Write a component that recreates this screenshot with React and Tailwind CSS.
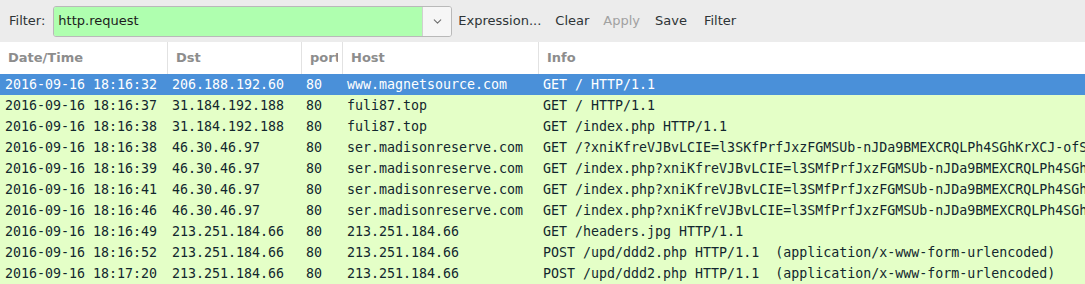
import React from "react";
import { ChevronDown } from "lucide-react";

const rows = [
  ["2016-09-16 18:16:32", "206.188.192.60", "80", "www.magnetsource.com", "GET / HTTP/1.1"],
  ["2016-09-16 18:16:37", "31.184.192.188", "80", "fuli87.top", "GET / HTTP/1.1"],
  ["2016-09-16 18:16:38", "31.184.192.188", "80", "fuli87.top", "GET /index.php HTTP/1.1"],
  ["2016-09-16 18:16:38", "46.30.46.97", "80", "ser.madisonreserve.com", "GET /?xniKfreVJBvLCIE=l3SKfPrfJxzFGMSUb-nJDa9BMEXCRQLPh4SGhKrXCJ-ofSih17OIFxzsmTu2KV_OpqxveN0SZFT_zR3AaQ4ilotXQB5MrPzwnEqWwxWeioXW-pHQaqf-lCh4"],
  ["2016-09-16 18:16:39", "46.30.46.97", "80", "ser.madisonreserve.com", "GET /index.php?xniKfreVJBvLCIE=l3SMfPrfJxzFGMSUb-nJDa9BMEXCRQLPh4SGhKrXCJ-ofSih17OIFxzsmTu2KV_OpqxveN0SZFT"],
  ["2016-09-16 18:16:41", "46.30.46.97", "80", "ser.madisonreserve.com", "GET /index.php?xniKfreVJBvLCIE=l3SMfPrfJxzFGMSUb-nJDa9BMEXCRQLPh4SGhKrXCJ-ofSih17OIFxzsmTu2KV_OpqxveN0SZFT"],
  ["2016-09-16 18:16:46", "46.30.46.97", "80", "ser.madisonreserve.com", "GET /index.php?xniKfreVJBvLCIE=l3SMfPrfJxzFGMSUb-nJDa9BMEXCRQLPh4SGhKrXCJ-ofSih17OIFxzsmTu2KV_OpqxveN0SZFT"],
  ["2016-09-16 18:16:49", "213.251.184.66", "80", "213.251.184.66", "GET /headers.jpg HTTP/1.1"],
  ["2016-09-16 18:16:52", "213.251.184.66", "80", "213.251.184.66", "POST /upd/ddd2.php HTTP/1.1  (application/x-www-form-urlencoded)"],
  ["2016-09-16 18:17:20", "213.251.184.66", "80", "213.251.184.66", "POST /upd/ddd2.php HTTP/1.1  (application/x-www-form-urlencoded)"],
];

const headers = ["Date/Time", "Dst", "port", "Host", "Info"];

function ToolButton({ label, disabled }) {
  return (
    <span className={disabled ? "text-[#a1a1a1]" : "text-[#2e3436]"}>{label}</span>
  );
}

export default function App() {
  return (
    <div className="w-[1085px] h-[284px] overflow-hidden bg-white font-['DejaVu_Sans',sans-serif]">
      {/* filter toolbar */}
      <div className="h-[42px] bg-[#ececec] flex items-center text-[13px]">
        <span className="ml-[9px] text-[#2e3436]">Filter:</span>
        <div className="ml-[8px] w-[399px] h-[31px] flex rounded-[3px] border border-[#b9b9b9] overflow-hidden">
          <div className="flex-1 bg-[#afffaf] flex items-center pl-[4px] text-[#1c1c1c]">http.request</div>
          <div className="w-[29px] bg-[#f6f6f6] border-l border-[#d0d0d0] flex items-center justify-center">
            <ChevronDown size={13} strokeWidth={2} className="text-[#6f6f6f]" />
          </div>
        </div>
        <div className="ml-[6px] flex items-center gap-[14px]">
          <ToolButton label="Expression..." />
          <ToolButton label="Clear" />
          <ToolButton label="Apply" disabled />
          <span className="ml-[1px] text-[#2e3436]">Save</span>
          <span className="ml-[3px] text-[#2e3436]">Filter</span>
        </div>
      </div>

      {/* column header */}
      <div className="h-[32px] grid grid-cols-[167px_134px_41px_196px_1fr] items-center text-[13px] font-bold text-[#8d8d8d]">
        {headers.map((h, i) => (
          <div
            key={h}
            className={
              "h-full flex items-center min-w-0 pl-[8px] pr-[4px] " +
              (i > 0 ? "border-l border-[#e2e2e2]" : "")
            }
          >
            <span className="block overflow-hidden whitespace-nowrap">{h}</span>
          </div>
        ))}
      </div>

      {/* packet rows */}
      <div className="font-['DejaVu_Sans_Mono',monospace] text-[13.3px]">
        {rows.map((r, idx) => (
          <div
            key={idx}
            className={
              "h-[21px] grid grid-cols-[167px_134px_41px_196px_1fr] items-center " +
              (idx === 0 ? "bg-[#4a90d9] text-white" : "bg-[#e4ffc7] text-[#12272e]")
            }
          >
            {r.map((c, j) => (
              <div key={j} className="pl-[5px] whitespace-pre overflow-hidden">
                {c}
              </div>
            ))}
          </div>
        ))}
      </div>
    </div>
  );
}
